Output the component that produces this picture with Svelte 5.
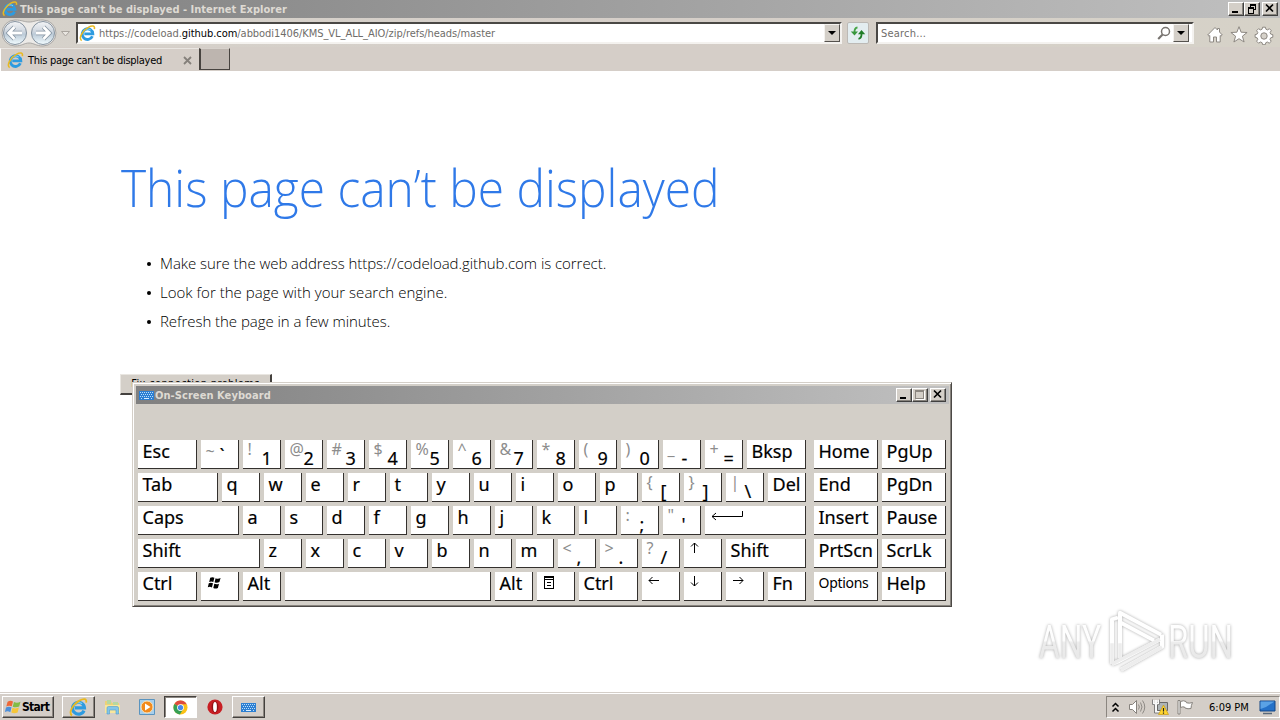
<script lang="ts">
  type Key = {
    label?: string;
    upper?: string;
    icon?: string;
    w?: number;
    small?: boolean;
    low?: boolean;
  };

  const k = (label: string, w = 38): Key => ({ label, w });
  const dual = (upper: string, label: string): Key => ({ upper, label, w: 38 });
  const icon = (name: string, w = 38): Key => ({ icon: name, w });
  const letters = (s: string): Key[] => s.split('').map((c) => k(c));

  const rows: Key[][] = [
    [
      k('Esc', 59), { ...dual('~', '`'), low: true }, dual('!', '1'), dual('@', '2'), dual('#', '3'),
      dual('$', '4'), dual('%', '5'), dual('^', '6'), dual('&', '7'), dual('*', '8'),
      dual('(', '9'), dual(')', '0'), dual('_', '-'), dual('+', '='), k('Bksp', 59),
    ],
    [k('Tab', 80), ...letters('qwertyuiop'), dual('{', '['), dual('}', ']'), dual('|', '\\'), k('Del')],
    [k('Caps', 101), ...letters('asdfghjkl'), dual(':', ';'), dual('"', "'"), icon('enter', 101)],
    [
      k('Shift', 122), ...letters('zxcvbnm'), dual('<', ','), dual('>', '.'), dual('?', '/'),
      icon('up'), k('Shift', 80),
    ],
    [
      k('Ctrl', 59), icon('win'), k('Alt'), k('', 206), k('Alt'), icon('menu'), k('Ctrl', 59),
      icon('left'), icon('down'), icon('right'), k('Fn'),
    ],
  ];

  const navRows: Key[][] = [
    [k('Home', 64), k('PgUp', 64)],
    [k('End', 64), k('PgDn', 64)],
    [k('Insert', 64), k('Pause', 64)],
    [k('PrtScn', 64), k('ScrLk', 64)],
    [{ ...k('Options', 64), small: true }, k('Help', 64)],
  ];

  const tips = [
    'Make sure the web address https://codeload.github.com is correct.',
    'Look for the page with your search engine.',
    'Refresh the page in a few minutes.',
  ];
</script>

{#snippet ie(size: number)}
  <svg width={size} height={size} viewBox="0 0 16 16">
    <path d="M12.6 10.6A5 5 0 1 1 13 8.3H5" fill="none" stroke="#2d9be0" stroke-width="2.7" />
    <path d="M4.1 6.5A4.5 4.5 0 0 1 11 4.8" fill="none" stroke="#7ed0f5" stroke-width="1" />
    <path d="M2.5 14.7C-.6 12.5 3.1 5.2 8.8 2.2c3.6-2 6.5-1.7 5.6 1.7" fill="none" stroke="#e9b921" stroke-width="1.5" />
  </svg>
{/snippet}

{#snippet keyboardIcon()}
  <svg width="15" height="9" viewBox="0 0 15 9" shape-rendering="crispEdges">
    <rect x="0" y="0" width="15" height="9" fill="#2c7fd2" />
    <path d="M1 1.5h13M2 3.5h12M1 5.5h13M2 7.5h2M5 7.5h6M12 7.5h2" stroke="#b9ddfb" stroke-dasharray="1 1" />
    <path d="M5 7.5h5" stroke="#d9edff" />
  </svg>
{/snippet}

{#snippet glyph(name: string)}
  {#if name === 'win'}
    <svg class="g-win" width="16" height="14" viewBox="0 0 16 14">
      <path d="M3.2 1.8Q5.5.6 7.4 1.8L6.3 6Q4.3 5 2.2 6ZM8.6 2.3q2.5 1.2 5-.2l-1.2 4q-2.5 1.3-4.8.2ZM1.8 7.2Q4 6.2 6 7.3L4.9 11.5Q3 10.2.8 11.3ZM7.3 7.8q2.4 1 4.7-.1l-1.1 4.2q-2.4 1.2-4.6 0Z" />
    </svg>
  {:else if name === 'menu'}
    <svg class="g-menu" width="11" height="14" viewBox="0 0 11 14" shape-rendering="crispEdges">
      <path d="M.5.5h9v12h-9zM0 3.5h10M3 6.5h4M3 9.5h4" fill="none" stroke="#000" />
      <path d="M0 1.5h10" stroke="#000" />
    </svg>
  {:else if name === 'enter'}
    <svg class="g-enter" width="34" height="12" viewBox="0 0 34 12">
      <path d="M31.5 0v5.5H1M5 2 1 5.5 5 9" fill="none" stroke="#000" />
    </svg>
  {:else}
    <svg class="g-arrow {name}" width="12" height="12" viewBox="0 0 12 12">
      <path d="M11 5.5H1M4.5 2 1 5.5 4.5 9" fill="none" stroke="#000" />
    </svg>
  {/if}
{/snippet}

{#snippet keyCap(key: Key)}
  <div class="key" class:dual={key.upper} class:small={key.small} style="width: {key.w}px;">
    {#if key.icon}
      {@render glyph(key.icon)}
    {:else if key.upper}
      <span class="upper" class:tilde={key.low}>{key.upper}</span><span class="lower" class:tick={key.low}>{key.label}</span>
    {:else}
      {key.label}
    {/if}
  </div>
{/snippet}

{#snippet windowButton(kind: string)}
  <span class="wbtn {kind}">
    <svg width="14" height="12" viewBox="0 0 14 12" shape-rendering="crispEdges">
      {#if kind === 'min'}
        <path d="M3 9h6" stroke="#000" stroke-width="2" />
      {:else if kind === 'restore'}
        <path d="M5 2h6M5.5 1v3M10.5 2v5M8 6.5h3M3 5h6M3.5 5v5.5h5V5" fill="none" stroke="#000" />
        <path d="M5 1.5h6M3 4.5h6" stroke="#000" />
      {:else if kind === 'max'}
        <path d="M2.5 1.5h8v8h-8zM2 2.5h9" fill="none" stroke="#8b8680" />
        <path d="M11.5 2v8.5H3" fill="none" stroke="#fff" />
      {:else}
        <path d="m3 1.5 7 7m0-7-7 7" stroke="#000" stroke-width="1.7" shape-rendering="auto" />
      {/if}
    </svg>
  </span>
{/snippet}

<div class="desktop">
  <header class="titlebar">
    {@render ie(16)}
    <span class="title">This page can't be displayed - Internet Explorer</span>
    <div class="wbuttons">
      {@render windowButton('min')}{@render windowButton('restore')}{@render windowButton('close')}
    </div>
  </header>

  <nav class="navbar">
    <svg class="backfwd" width="74" height="28" viewBox="0 0 74 28">
      <defs>
        <linearGradient id="orb" x2="0" y2="1">
          <stop offset="0" stop-color="#f4f5f7" />
          <stop offset=".45" stop-color="#cdd5de" />
          <stop offset=".55" stop-color="#bccbd8" />
          <stop offset="1" stop-color="#f2fcff" />
        </linearGradient>
      </defs>
      <path d="M15 1C22 1 24 3 29 3S36 1 43 1a13 13 0 0 1 0 26c-7 0-9-3-14-3s-7 3-14 3A13 13 0 0 1 15 1Z" fill="#eceae7" stroke="#a9a7a5" />
      <circle cx="15" cy="14" r="11.5" fill="url(#orb)" stroke="#8693a0" />
      <circle cx="43" cy="14" r="11.5" fill="url(#orb)" stroke="#8693a0" />
      <path d="M22 14H9m5.5-6L8.7 14l5.8 6M36 14h13m-5.5-6 5.8 6-5.8 6" fill="none" stroke="#8695a3" stroke-width="4.4" />
      <path d="M22 14H9m5.5-6L8.7 14l5.8 6M36 14h13m-5.5-6 5.8 6-5.8 6" fill="none" stroke="#fff" stroke-width="2.8" />
      <path d="M61.5 12.5h8l-4 4.5z" fill="#e9e6e1" stroke="#aaa59f" />
    </svg>
    <div class="field address">
      {@render ie(17)}
      <span class="url">https://codeload.<b>github.com</b>/abbodi1406/KMS_VL_ALL_AIO/zip/refs/heads/master</span>
      <span class="drop"></span>
    </div>
    <div class="refresh">
      <svg width="16" height="14" viewBox="0 0 16 14">
        <path d="M7.5 1.5Q4.3 1.8 4.5 6.5" fill="none" stroke="#46a546" stroke-width="1.8" />
        <path d="M.8 5.5h7.2L4.5 9.5z" fill="#37963c" />
        <path d="M8.5 12.8q3.2-.5 3-5" fill="none" stroke="#207d28" stroke-width="1.8" />
        <path d="M8 8.2h7.2L11.5 4z" fill="#207d28" />
      </svg>
    </div>
    <div class="field search">
      <span class="placeholder">Search...</span>
      <svg width="15" height="15" viewBox="0 0 15 15">
        <circle cx="8.5" cy="5.5" r="4" fill="none" stroke="#77736f" stroke-width="1.5" />
        <path d="m5.6 8.5-4.4 4.6" stroke="#77736f" stroke-width="2.1" />
      </svg>
      <span class="drop"></span>
    </div>
    <svg class="tools" width="68" height="20" viewBox="0 0 68 20">
      <g fill="#fff" stroke="#8d8882">
        <path d="M9 2.5 11.5 5V3.5h2V7l2.8 3-1.3 1.2-.8-.7V17h-3.7v-5h-3v5H3.8v-6.5l-.8.7L1.7 10Z" />
        <path d="m33 1.7 2.1 5.5 6 .3-4.7 3.7 1.7 5.8-5.1-3.3-5.1 3.3 1.7-5.8-4.7-3.7 6-.3Z" />
        <path d="m56.6 2.2 2.8 0 .5 2 1.6.7 1.9-1.2 1.9 2-1.2 1.8.6 1.6 2.1.5v2.7l-2.1.5-.7 1.6 1.2 1.9-2 1.9-1.8-1.2-1.6.7-.5 2h-2.7l-.5-2-1.7-.7-1.8 1.2-2-2 1.2-1.8-.7-1.6-2-.5V9.6l2-.5.7-1.6-1.2-1.8 2-2 1.8 1.2 1.7-.7Z" />
        <circle cx="58" cy="11" r="3.2" fill="#d6d2ca" />
      </g>
    </svg>
  </nav>

  <div class="tabs">
    <div class="tab">
      {@render ie(17)}
      <span class="tab-title">This page can't be displayed</span>
      <svg width="9" height="9" viewBox="0 0 9 9"><path d="m1 1 7 7m0-7-7 7" stroke="#85807b" stroke-width="1.8" /></svg>
    </div>
    <div class="newtab"></div>
  </div>

  <main class="page">
    <h1>This page can’t be displayed</h1>
    <ul>
      {#each tips as tip}
        <li>{tip}</li>
      {/each}
    </ul>
    <button>Fix connection problems</button>
  </main>

  <section class="osk">
    <div class="osk-title">
      {@render keyboardIcon()}
      <span>On-Screen Keyboard</span>
      <div class="wbuttons">
        {@render windowButton('min')}{@render windowButton('max')}{@render windowButton('close')}
      </div>
    </div>
    <div class="osk-body">
      <div class="block">
        {#each rows as row}
          <div class="krow">{#each row as key}{@render keyCap(key)}{/each}</div>
        {/each}
      </div>
      <div class="block">
        {#each navRows as row}
          <div class="krow">{#each row as key}{@render keyCap(key)}{/each}</div>
        {/each}
      </div>
    </div>
  </section>

  <svg class="watermark" width="220" height="74" viewBox="0 0 220 74">
    <defs>
      <linearGradient id="wm" x2="0" y2="1">
        <stop offset="0" stop-color="#fff" />
        <stop offset=".48" stop-color="#fdfdfd" />
        <stop offset=".52" stop-color="#ececec" />
        <stop offset="1" stop-color="#e6e6e6" />
      </linearGradient>
    </defs>
    <g fill="url(#wm)">
      <text x="9" y="54" textLength="62" lengthAdjust="spacingAndGlyphs">ANY</text>
      <text x="138" y="54" textLength="65" lengthAdjust="spacingAndGlyphs">RUN</text>
    </g>
    <g fill="none" stroke-linejoin="round" transform="translate(0 4) scale(1 .95)">
      <path d="M82 59V12l6-2M90 53V5l41 23M90 15l34 19M82 59l7-3 41-23M91 65l41-24V28" stroke="#fff" stroke-width="4" />
      <path d="M82 59V37M90 53V37M82 59l48-26M91 65l41-24" stroke="#ededed" stroke-width="3.5" />
    </g>
  </svg>

  <footer class="taskbar">
    <div class="start">
      <svg width="17" height="16" viewBox="0 0 17 16">
        <path d="M2.6 2.7Q5.5 1 8 2.5L6.8 7.3Q4 6 1.3 7.5Z" fill="#ee6838" />
        <path d="M9 3q3 1.4 6.5-.3L14.2 7.5Q11 9 7.7 7.7Z" fill="#82bc45" />
        <path d="M1 8.5Q3.7 7 6.5 8.3L5.3 13.2Q2.5 11.5-.2 13.2Z" fill="#4c8fda" />
        <path d="M7.5 8.8q3.2 1.3 6.4-.2l-1.3 4.9q-3.2 1.5-6.3 0Z" fill="#f6c638" />
      </svg>
      <span>Start</span>
    </div>
    <div class="task raised">{@render ie(19)}</div>
    <div class="task">
      <svg width="18" height="17" viewBox="0 0 18 17">
        <path d="M1 2h6l1 2h7v10H1z" fill="#ecd277" />
        <path d="M3 1h4v4H3zM9 3h5v4H9z" fill="#b7d8a0" />
        <path d="M1 6h15v8H1z" fill="#f8e69c" />
        <path d="M3 15V9q0-1.5 1.5-1.5h8.5q1.5 0 1.5 1.5v6h-2.5v-4H5.5v4z" fill="#82c5ea" stroke="#4d9dcc" stroke-width=".6" />
      </svg>
    </div>
    <div class="task">
      <svg width="16" height="16" viewBox="0 0 16 16">
        <path d="M.5.5h15v15H.5z" fill="#a7cfec" stroke="#5a94bf" />
        <circle cx="8" cy="8" r="6" fill="#f28a1c" stroke="#fce2b6" />
        <path d="m6 4.5 5.5 3.5L6 11.5z" fill="#fff" />
      </svg>
    </div>
    <div class="task pressed">
      <svg width="15" height="15" viewBox="0 0 16 16">
        <circle cx="8" cy="8" r="7.5" fill="#fbc116" />
        <path d="M8 8 1.5 4.2A7.5 7.5 0 0 1 14.6 4.5H8z" fill="#dd4b3e" />
        <path d="M8 8 1.5 4.2a7.5 7.5 0 0 0 5.8 11.3L11 9.7z" fill="#36a055" />
        <circle cx="8" cy="8" r="3.6" fill="#fff" />
        <circle cx="8" cy="8" r="2.8" fill="#4788e8" />
      </svg>
    </div>
    <div class="task">
      <svg width="16" height="16" viewBox="0 0 16 16">
        <circle cx="8" cy="8" r="7.6" fill="#c81e23" />
        <ellipse cx="8" cy="8" rx="3.4" ry="5.8" fill="#8f1015" />
        <ellipse cx="8" cy="8" rx="1.9" ry="5" fill="#fff" />
      </svg>
    </div>
    <div class="task raised">{@render keyboardIcon()}</div>

    <div class="tray">
      <svg width="9" height="11" viewBox="0 0 9 11"><path d="m1.5 4.5 3-3 3 3m-6 5 3-3 3 3" fill="none" stroke="#000" stroke-width="1.5" /></svg>
      <svg width="18" height="16" viewBox="0 0 18 16">
        <path d="M1.5 5.5h3l4-4v13l-4-4h-3z" fill="#fff" stroke="#86827d" />
        <path d="M10.5 5.5q1.7 2.5 0 5M12.5 3.5q3 4.5 0 9M14.5 1.5q4.5 6.5 0 13" fill="none" stroke="#8e8a85" />
      </svg>
      <svg width="17" height="16" viewBox="0 0 17 16">
        <path d="M5.5 3.5h10v8h-10z" fill="#aeb4b6" stroke="#686868" />
        <path d="M1.5 1v4h5V1M4 1v3M4 5.5V13h4" fill="none" stroke="#f8f8f8" stroke-width="2" />
        <path d="M.5.5v5h2v8.5h5M7.5.5v5h-2v6" fill="none" stroke="#686868" stroke-width=".8" />
        <path d="m11.5 6 5 9.5h-10z" fill="#ffd52e" stroke="#c99b12" stroke-width=".7" />
        <path d="M11.5 9v3.5m0 1v1.2" stroke="#222" stroke-width="1.2" />
      </svg>
      <svg width="17" height="16" viewBox="0 0 17 16">
        <path d="M1 1.5h2V15H1zM3.5 2.5q3-1.5 5.5 0l.5 1.3q3 .8 6-.3-1.5 3-1.5 6-3 .8-6-.5l-.5-1q-2-.5-4 .5z" fill="#fff" stroke="#86827d" />
      </svg>
      <span class="clock">6:09 PM</span>
      <svg width="17" height="15" viewBox="0 0 17 15">
        <path d="M1 1h15v10H1z" fill="#2471c8" stroke="#154685" />
        <path d="M1.5 1.5h14L7 7 1.5 9z" fill="#5aa2e5" />
        <path d="M4 13.5h9" stroke="#596879" stroke-width="1.5" />
      </svg>
    </div>
  </footer>
</div>

<style>
  :global(body) {
    overflow: hidden;
  }
  .desktop {
    --face: #d4cfc8;
    position: relative;
    display: flex;
    flex-direction: column;
    width: 1280px;
    height: 720px;
    background: #fff;
    font: 11px/14px 'DejaVu Sans Condensed', 'DejaVu Sans', sans-serif;
    font-stretch: condensed;
    color: #000;
    white-space: nowrap;
  }
  svg {
    display: block;
    flex: none;
  }
  .titlebar {
    display: flex;
    align-items: center;
    height: 18px;
    padding-left: 2px;
    background: linear-gradient(90deg, #808080, #c0c0c0);
    color: #dedad3;
    font-weight: bold;
  }
  .title {
    margin-left: 2px;
    padding-top: 1px;
    letter-spacing: 0.02px;
  }
  .wbuttons {
    display: flex;
    margin-left: auto;
    margin-right: 2px;
  }
  .wbtn {
    box-sizing: border-box;
    width: 16px;
    height: 14px;
    overflow: hidden;
    background: var(--face);
    border: 1px solid;
    border-color: #fff #404040 #404040 #fff;
    box-shadow: inset -1px -1px #87837d;
  }
  .wbtn.close {
    margin-left: 2px;
  }
  .navbar {
    box-sizing: border-box;
    display: flex;
    height: 29px;
    padding-top: 1px;
    background: linear-gradient(90deg, #d6d2cb, #d5cec8 50%, #d6d2c8);
  }
  .field {
    box-sizing: border-box;
    display: flex;
    align-items: center;
    height: 22px;
    margin-top: 3px;
    background: #fff;
    border: 2px solid;
    border-color: #4a4845 #f4f2ef #f4f2ef #4a4845;
    color: #6f6d6a;
  }
  .address {
    width: 766px;
    margin-left: 2px;
    padding-left: 1px;
  }
  .url {
    flex: 1;
    margin-left: 3px;
    padding-top: 2px;
    letter-spacing: -0.05px;
  }
  .url b {
    font-weight: normal;
    color: #000;
  }
  .drop {
    box-sizing: border-box;
    position: relative;
    width: 16px;
    height: 18px;
    background: var(--face);
    border: 1px solid;
    border-color: #f4f2ef #55524e #55524e #f4f2ef;
  }
  .drop::after {
    content: '';
    position: absolute;
    left: 3px;
    top: 6px;
    border: 4px solid transparent;
    border-top-color: #000;
    border-bottom: 0;
  }
  .refresh {
    box-sizing: border-box;
    width: 22px;
    height: 22px;
    margin: 3px 0 0 5px;
    padding: 3px 2px;
    background: #e3edf0;
    border: 1px solid #bcb9b5;
    border-radius: 2px;
  }
  .search {
    width: 318px;
    margin-left: 7px;
    padding-left: 3px;
    padding-right: 3px;
  }
  .placeholder {
    flex: 1;
    padding-top: 2px;
    letter-spacing: 0.2px;
  }
  .search svg {
    margin-right: 1px;
  }
  .tools {
    margin: 6px 0 0 12px;
  }
  .tabs {
    display: flex;
    height: 24px;
    background: #d5cec8;
  }
  .tab {
    box-sizing: border-box;
    display: flex;
    align-items: center;
    width: 199px;
    height: 23px;
    margin-top: 1px;
    padding-left: 6px;
    border-left: 1px solid #fff;
    border-top: 1px solid #e9e6e2;
  }
  .tab-title {
    width: 155px;
    margin-left: 4px;
    padding-top: 1px;
    letter-spacing: -0.28px;
  }
  .newtab {
    box-sizing: border-box;
    width: 31px;
    height: 22px;
    margin-top: 1px;
    background: #bdb5af;
    border: 1px solid #47433f;
    border-top-color: #d7d2cc;
    border-width: 1px 1px 1px 2px;
  }
  .page {
    flex: 1;
    padding: 81px 0 0 120px;
  }
  h1 {
    margin: 0;
    padding-left: 1px;
    font: 300 51px/70px 'Open Sans', 'Noto Sans', sans-serif;
    color: #2f79e8;
    transform: scaleX(0.939);
    transform-origin: left;
  }
  ul {
    margin: 27px 0 0;
    padding: 0 0 0 40px;
    font: 300 15px/29px 'Open Sans', 'Noto Sans', sans-serif;
    letter-spacing: -0.05px;
  }
  li {
    list-style: none;
    display: flex;
    align-items: center;
  }
  li:nth-child(2) {
    letter-spacing: 0.02px;
  }
  li::before {
    content: '';
    width: 4px;
    height: 4px;
    margin: 0 9px 0 -13px;
    border-radius: 50%;
    background: #000;
  }
  .page button {
    box-sizing: border-box;
    display: block;
    width: 152px;
    height: 21px;
    margin-top: 38px;
    padding: 0 0 1px;
    background: var(--face);
    border: 1px solid;
    border-color: #e9e6e1 #44413e #44413e #e9e6e1;
    border-width: 1px 2px 2px 1px;
    font: inherit;
    letter-spacing: 0.35px;
  }

  .osk {
    box-sizing: border-box;
    position: absolute;
    left: 132px;
    top: 382px;
    width: 820px;
    height: 225px;
    padding: 2px 2px 2px;
    background: #d3cfc8;
    border: 1px solid;
    border-color: #d4cfc8 #4c4946 #4c4946 #d4cfc8;
    box-shadow: inset 1px 1px #fff, inset -1px -1px #87837d;
  }
  .osk-title {
    display: flex;
    align-items: center;
    height: 18px;
    margin: 1px 0 0 1px;
    padding-left: 3px;
    background: linear-gradient(90deg, #808080, #c0c0c0);
    color: #dedad3;
    font-weight: bold;
  }
  .osk-title > span {
    margin-left: 1px;
    padding-top: 2px;
    letter-spacing: 0.07px;
  }
  .osk-title .wbuttons {
    margin-right: 3px;
  }
  .osk-body {
    display: flex;
    gap: 8px;
    padding: 36px 0 0 3px;
  }
  .block,
  .krow {
    display: flex;
    gap: 4px;
  }
  .block {
    flex-direction: column;
  }
  .key {
    box-sizing: border-box;
    flex: none;
    height: 29px;
    padding-left: 4.5px;
    background: #fff;
    border-right: 1px solid #34312e;
    border-bottom: 1px solid #34312e;
    font: 18px/22px 'Noto Sans', 'Open Sans', sans-serif;
    -webkit-text-stroke: 0.2px #000;
  }
  .small {
    font-size: 14px;
    line-height: 22px;
    letter-spacing: -0.3px;
    -webkit-text-stroke: 0;
  }
  .dual {
    display: grid;
    grid-template-columns: 14px 1fr;
    align-items: start;
  }
  .upper {
    color: #8d8d8d;
    font-size: 16px;
    line-height: 19px;
    -webkit-text-stroke: 0;
  }
  .lower {
    margin-top: 7px;
    line-height: 22px;
  }
  .tilde {
    margin-top: 2px;
  }
  .tick {
    margin-top: 4px;
  }
  .g-win {
    margin: 4px 0 0 1px;
  }
  .g-menu {
    margin: 4px 0 0 2px;
  }
  .g-enter {
    margin: 5px 0 0 1px;
  }
  .g-arrow {
    margin: 3px 0 0 1px;
  }
  .g-arrow.up {
    margin-left: -1px;
    transform: rotate(90deg);
  }
  .g-arrow.down {
    margin-left: 0;
    transform: rotate(-90deg);
  }
  .right {
    transform: scaleX(-1);
  }

  .watermark {
    position: absolute;
    left: 1030px;
    top: 604px;
    filter: drop-shadow(0 0 1.5px #aaa);
  }
  .watermark text {
    font: 47px 'Roboto', sans-serif;
  }

  .taskbar {
    box-sizing: border-box;
    display: flex;
    height: 28px;
    padding: 3px 0 0 2px;
    background: #d4cec8;
    border-top: 1px solid #d4cec8;
    box-shadow: inset 0 1px #fff;
  }
  .start,
  .task {
    box-sizing: border-box;
    display: flex;
    align-items: center;
    justify-content: center;
    height: 22px;
    border: 1px solid transparent;
  }
  .task {
    width: 33px;
  }
  .start {
    width: 52px;
    margin-right: 8px;
    font-size: 12px;
    font-weight: bold;
    letter-spacing: -0.7px;
  }
  .start svg {
    margin-left: -2px;
  }
  .start,
  .raised {
    border-color: #fff #44413e #44413e #fff;
    box-shadow: inset -1px -1px #8b8680;
  }
  .task + .task {
    margin-left: 1px;
  }
  .pressed {
    background: #fff;
    border-color: #44413e #fff #fff #44413e;
    box-shadow: inset 1px 1px #8b8680;
  }
  .tray {
    box-sizing: border-box;
    display: flex;
    align-items: center;
    width: 174px;
    height: 22px;
    margin-left: auto;
    padding-left: 4px;
    border: 1px solid;
    border-color: #8b8680 #fff #fff #8b8680;
  }
  .tray svg:nth-child(2) {
    margin-left: 8px;
  }
  .tray svg:nth-child(3) {
    margin-left: 6px;
  }
  .tray svg:nth-child(4) {
    margin-left: 8px;
  }
  .clock {
    width: 40px;
    margin: 0 10px 0 15px;
    padding-top: 1px;
  }
</style>
